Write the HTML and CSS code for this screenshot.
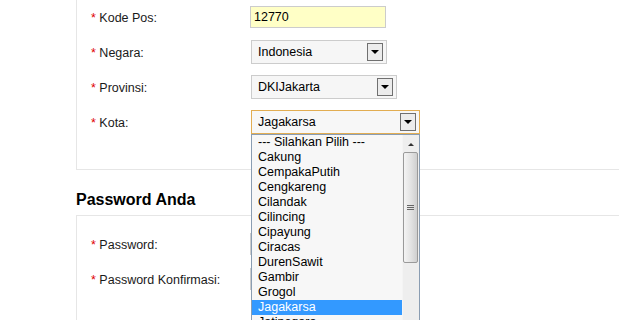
FILE: index.html
```html
<!DOCTYPE html>
<html lang="id">
<head>
<meta charset="utf-8">
<title>Alamat &amp; Password</title>
<link rel="stylesheet" href="styles.css">
</head>
<body>
<div class="page">
  <div class="card card-address">
    <div class="row">
      <label class="label"><span class="req">*</span> Kode Pos:</label>
      <input class="text-input" type="text" value="12770">
    </div>
    <div class="row">
      <label class="label"><span class="req">*</span> Negara:</label>
      <div class="select select-negara"><span class="select-text">Indonesia</span><span class="arrow"></span></div>
    </div>
    <div class="row">
      <label class="label"><span class="req">*</span> Provinsi:</label>
      <div class="select select-provinsi"><span class="select-text">DKIJakarta</span><span class="arrow"></span></div>
    </div>
    <div class="row">
      <label class="label"><span class="req">*</span> Kota:</label>
      <div class="select-wrap">
        <div class="select select-kota is-open"><span class="select-text">Jagakarsa</span><span class="arrow"></span></div>
        <div class="dropdown">
          <ul class="options">
            <li>--- Silahkan Pilih ---</li>
            <li>Cakung</li>
            <li>CempakaPutih</li>
            <li>Cengkareng</li>
            <li>Cilandak</li>
            <li>Cilincing</li>
            <li>Cipayung</li>
            <li>Ciracas</li>
            <li>DurenSawit</li>
            <li>Gambir</li>
            <li>Grogol</li>
            <li class="selected">Jagakarsa</li>
            <li>Jatinegara</li>
            <li>Johar Baru</li>
          </ul>
          <div class="scrollbar">
            <div class="sb-up"><span class="sb-up-tri"></span></div>
            <div class="sb-thumb"><span class="grip"></span><span class="grip"></span><span class="grip"></span></div>
          </div>
        </div>
      </div>
    </div>
  </div>

  <h2 class="section-title">Password Anda</h2>

  <div class="card card-password">
    <div class="row">
      <label class="label"><span class="req">*</span> Password:</label>
      <input class="text-input" type="password" value="">
    </div>
    <div class="row">
      <label class="label"><span class="req">*</span> Password Konfirmasi:</label>
      <input class="text-input" type="password" value="">
    </div>
  </div>
</div>
</body>
</html>
```

FILE: styles.css
```css
html {
  overflow: hidden;
}
body {
  margin: 0;
  background: #ffffff;
  font-family: "Liberation Sans", Arial, sans-serif;
  font-size: 12.5px;
  color: #1a1a1a;
}
.page {
  margin-left: 76px;
  margin-top: -12px;
  width: 640px;
}
.card {
  border: 1px solid #e6e6e6;
  padding: 10px 0 30px 14px;
}
.card-password {
  padding-bottom: 40px;
}
.row {
  display: flex;
  align-items: center;
  height: 35px;
}
.label {
  width: 159px;
  flex: none;
  padding-top: 2px;
}
.req {
  color: #e00000;
}
.text-input {
  box-sizing: border-box;
  width: 136px;
  height: 22px;
  margin: 0;
  padding: 0 3px;
  border: 1px solid #cccccc;
  background: #ffffc6;
  font-family: "Liberation Sans", Arial, sans-serif;
  font-size: 12.5px;
  color: #000;
  outline: none;
}
.select {
  box-sizing: border-box;
  height: 24px;
  margin-left: 1px;
  display: flex;
  align-items: center;
  justify-content: space-between;
  padding: 0 3px 0 6px;
  border: 1px solid #cccccc;
  background: #f6f6f6;
  color: #000;
}
.select-negara { width: 136px; }
.select-provinsi { width: 146px; }
.select-kota {
  width: 169px;
  border-color: #e2ad52;
  background: #f7f7f7;
}
.arrow {
  box-sizing: border-box;
  width: 16px;
  height: 18px;
  border: 1px solid #707070;
  background: #ececec;
  display: flex;
  align-items: center;
  justify-content: center;
}
.arrow::after {
  content: "";
  border-left: 4px solid transparent;
  border-right: 4px solid transparent;
  border-top: 4px solid #000;
  margin-top: 1px;
}
.select-wrap {
  position: relative;
}
.dropdown {
  position: absolute;
  left: 1px;
  top: 24px;
  z-index: 10;
  width: 169px;
  box-sizing: border-box;
  border: 1px solid #8a9db2;
  background: #f7f7f7;
  display: flex;
}
.options {
  list-style: none;
  margin: 0;
  padding: 0;
  width: 150px;
  flex: none;
}
.options li {
  height: 15px;
  line-height: 15px;
  padding-left: 6px;
  color: #000;
  white-space: nowrap;
}
.options li.selected {
  background: #3399ff;
  color: #ffffff;
}
.scrollbar {
  flex: 1;
  background: #eeeeee;
  border-left: 1px solid #f4f4f4;
  display: flex;
  flex-direction: column;
}
.sb-up {
  height: 17px;
  display: flex;
  align-items: center;
  justify-content: center;
}
.sb-up-tri {
  border-left: 3px solid transparent;
  border-right: 3px solid transparent;
  border-bottom: 3px solid #333;
  margin-top: 2px;
}
.sb-thumb {
  box-sizing: border-box;
  height: 111px;
  margin: 0 1px 0 0;
  border: 1px solid #9a9a9a;
  border-radius: 2px;
  background: linear-gradient(to right, #f4f4f4, #e2e2e2 55%, #cfcfcf);
  display: flex;
  flex-direction: column;
  align-items: center;
  justify-content: center;
  gap: 1px;
}
.grip {
  width: 7px;
  height: 1px;
  background: #666;
}
.section-title {
  margin: 20px 0 5px;
  font-size: 16px;
  line-height: 20px;
  font-weight: bold;
  color: #000;
}
```
